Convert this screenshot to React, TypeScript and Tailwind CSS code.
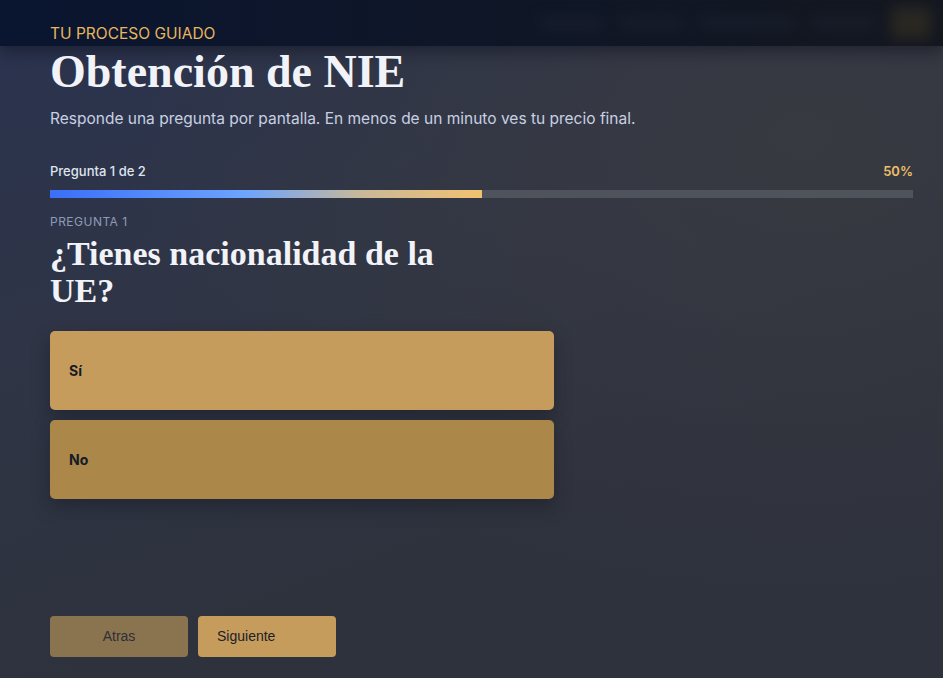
import { useState } from "react";

const options = ["Sí", "No"];

export default function App() {
  const [picked, setPicked] = useState<number | null>(null);
  const progress = 50;

  return (
    <div className="relative min-h-[678px] w-full overflow-hidden bg-[linear-gradient(160deg,#2a3350_0%,#2f3546_35%,#2e323d_70%,#2e323d_100%)] font-['Inter',sans-serif]">
      {/* soft tint on the right */}
      <div className="pointer-events-none absolute inset-0 bg-[radial-gradient(ellipse_at_85%_20%,rgba(60,60,64,0.7),transparent_60%)]" />

      {/* blurred sticky header */}
      <div className="absolute inset-x-0 top-0 z-10 h-[46px] bg-[linear-gradient(90deg,#0a1530_0%,#0e1628_45%,#13171f_100%)] shadow-[0_6px_14px_rgba(10,14,24,0.45)]">
        <div className="flex h-full items-center justify-end gap-4 pr-3 opacity-60 blur-[7px]">
          <span className="h-3 w-16 rounded bg-[#1c2230]" />
          <span className="h-3 w-16 rounded bg-[#1c2230]" />
          <span className="h-3 w-24 rounded bg-[#1c2230]" />
          <span className="h-3 w-16 rounded bg-[#1c2230]" />
          <span className="h-8 w-10 rounded bg-[#3a3224]" />
        </div>
      </div>

      <main className="relative z-20 flex flex-col pl-[50px] pr-[30px] pt-[25px]">
        <p className="text-[15.5px] leading-[18px] text-[#e8b65e]">TU PROCESO GUIADO</p>
        <h1 className="mt-[5px] font-['Liberation_Serif',serif] text-[46px] font-bold leading-[48px] text-[#f1f3f8]">
          Obtención de NIE
        </h1>
        <p className="mt-[13px] text-[15.5px] leading-[20px] text-[#c8d0e2]">
          Responde una pregunta por pantalla. En menos de un minuto ves tu precio final.
        </p>

        <div className="mt-[34px] flex items-center justify-between text-[13px] leading-[16px]">
          <span className="font-medium text-[#dfe4ee]">Pregunta 1 de 2</span>
          <span className="font-semibold text-[#f0c06a]">{progress}%</span>
        </div>
        <div className="mt-[11px] h-[8px] w-full bg-[#4f535c]">
          <div
            className="h-full bg-[linear-gradient(90deg,#3a6ff7_0%,#6ca4ff_45%,#c8b89a_72%,#f2c170_100%)]"
            style={{ width: `${progress}%` }}
          />
        </div>

        <p className="mt-[16px] text-[12px] leading-[16px] tracking-[0.04em] text-[#8e9bb6]">PREGUNTA 1</p>
        <h2 className="mt-[5px] max-w-[420px] font-['Liberation_Serif',serif] text-[34px] font-bold leading-[37px] text-[#f1f3f8]">
          ¿Tienes nacionalidad de la UE?
        </h2>

        <div className="mt-[22px] flex w-[504px] flex-col gap-[10px]">
          {options.map((o, i) => (
            <button
              key={o}
              onClick={() => setPicked(i)}
              className={`h-[79px] rounded-[5px] px-[19px] text-left text-[14px] font-bold text-[#151a26] shadow-[0_8px_18px_rgba(15,18,28,0.35)] ${
                i === 0 ? "bg-[#c59c5c]" : "bg-[#ab8749]"
              } ${picked === i ? "ring-2 ring-[#f0c06a]" : ""}`}
            >
              {o}
            </button>
          ))}
        </div>

        <div className="mt-[117px] flex gap-[10px] font-['Liberation_Sans',sans-serif] text-[14px]">
          <button className="h-[41px] w-[138px] rounded-[4px] bg-[#8a7450] text-[#2e2f36]">Atras</button>
          <button className="h-[41px] w-[138px] rounded-[4px] bg-[#c59c5c] px-[19px] text-left text-[#1e2029]">
            Siguiente
          </button>
        </div>
      </main>
    </div>
  );
}
